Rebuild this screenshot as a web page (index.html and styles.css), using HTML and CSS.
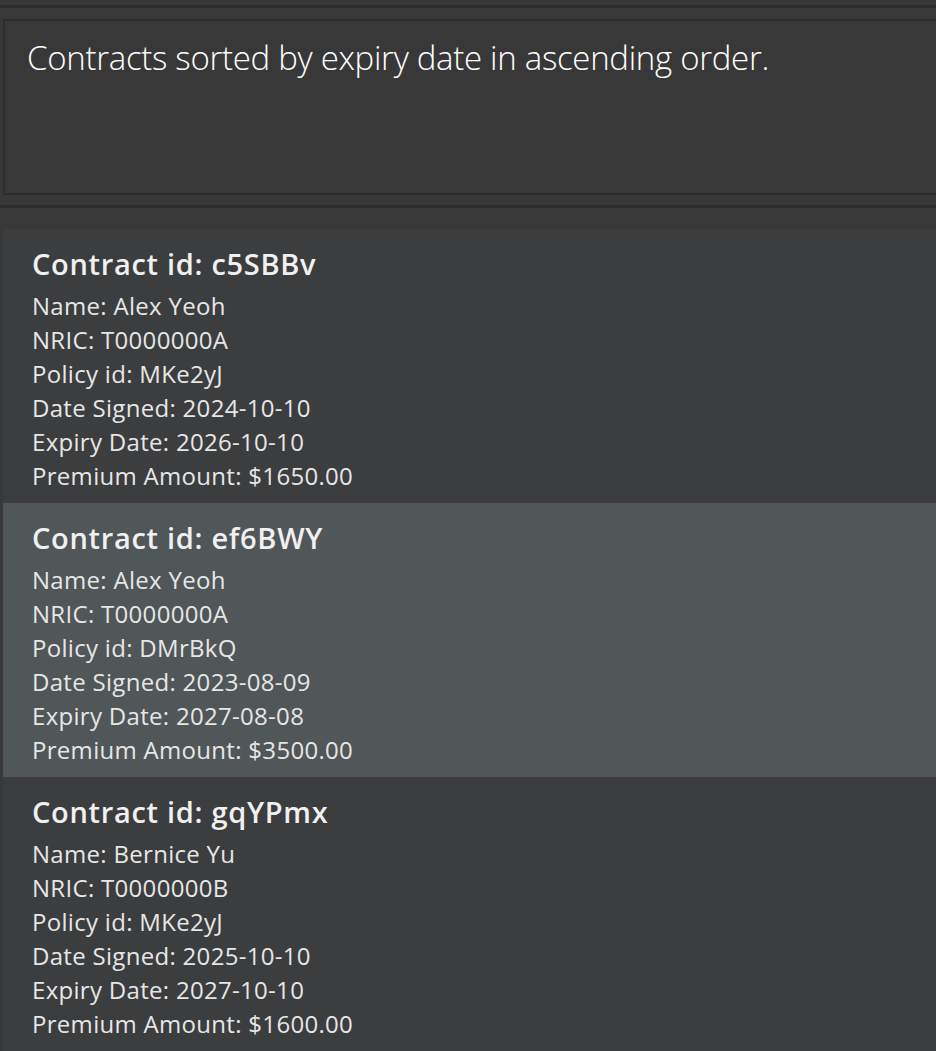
FILE: index.html
```html
<!DOCTYPE html>
<html lang="en">
<head>
<meta charset="utf-8">
<title>Contracts</title>
<link rel="stylesheet" href="styles.css">
</head>
<body>
<div class="app">
  <div class="gap-top"></div>
  <div class="divider"></div>
  <section class="result-pane">
    <div class="result-box">
      <p class="result-text">Contracts sorted by expiry date in ascending order.</p>
    </div>
  </section>
  <div class="divider"></div>
  <section class="list-pane">
    <div class="card">
      <h2 class="card-title">Contract id: c5SBBv</h2>
      <div class="card-line">Name: Alex Yeoh</div>
      <div class="card-line">NRIC: T0000000A</div>
      <div class="card-line">Policy id: MKe2yJ</div>
      <div class="card-line">Date Signed: 2024-10-10</div>
      <div class="card-line">Expiry Date: 2026-10-10</div>
      <div class="card-line">Premium Amount: $1650.00</div>
    </div>
    <div class="card card-selected">
      <h2 class="card-title">Contract id: ef6BWY</h2>
      <div class="card-line">Name: Alex Yeoh</div>
      <div class="card-line">NRIC: T0000000A</div>
      <div class="card-line">Policy id: DMrBkQ</div>
      <div class="card-line">Date Signed: 2023-08-09</div>
      <div class="card-line">Expiry Date: 2027-08-08</div>
      <div class="card-line">Premium Amount: $3500.00</div>
    </div>
    <div class="card">
      <h2 class="card-title">Contract id: gqYPmx</h2>
      <div class="card-line">Name: Bernice Yu</div>
      <div class="card-line">NRIC: T0000000B</div>
      <div class="card-line">Policy id: MKe2yJ</div>
      <div class="card-line">Date Signed: 2025-10-10</div>
      <div class="card-line">Expiry Date: 2027-10-10</div>
      <div class="card-line">Premium Amount: $1600.00</div>
    </div>
  </section>
</div>
</body>
</html>
```
FILE: styles.css
```css
html, body {
  margin: 0;
  padding: 0;
  background: #383838;
  height: 100%;
  overflow: hidden;
}

.app {
  display: flex;
  flex-direction: column;
  font-family: "Open Sans", "Noto Sans", sans-serif;
}

.gap-top {
  height: 5px;
}

.divider {
  height: 3px;
  background: #2b2b2b;
}

.result-pane {
  padding: 11px 0 10px 3px;
}

.result-box {
  height: 172px;
  border: 2px solid #2c2c2c;
  border-right: none;
  background: #383838;
  box-sizing: content-box;
}

.result-text {
  margin: 0;
  padding: 15px 0 0 22px;
  font-size: 33px;
  font-weight: 300;
  letter-spacing: -0.3px;
  line-height: 44px;
  color: #ffffff;
  white-space: nowrap;
}

.list-pane {
  padding: 21px 0 0 3px;
  display: flex;
  flex-direction: column;
}

.card {
  background: #3c3d3f;
  padding: 18px 0 10px 29px;
  display: flex;
  flex-direction: column;
}

.card-selected {
  background: #515658;
}

.card-title {
  margin: 0 0 8px 0;
  font-size: 29px;
  font-weight: 600;
  letter-spacing: 0.7px;
  line-height: 34px;
  color: #f0f0f0;
  white-space: nowrap;
}

.card-line {
  font-size: 24px;
  letter-spacing: 0.3px;
  line-height: 34px;
  color: #e6e6e6;
  white-space: nowrap;
}
```
